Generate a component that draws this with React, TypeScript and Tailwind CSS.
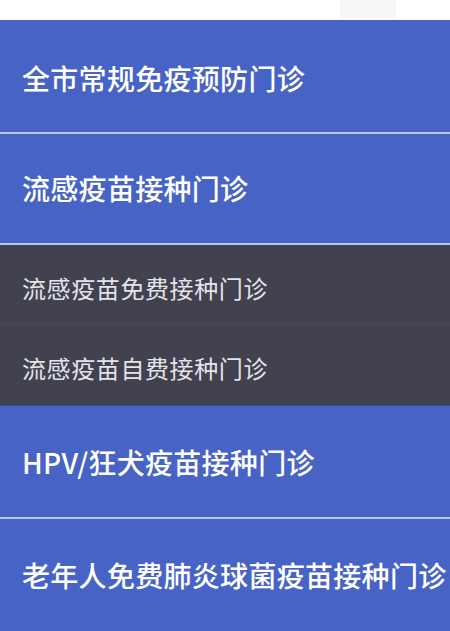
import React from "react";

const font = { fontFamily: '"Noto Sans CJK SC", "Noto Sans", sans-serif' };

function Main({ text, h }: { text: string; h: string }) {
  return (
    <div className={`flex items-center bg-[#4763c5] pl-[22px] ${h}`}>
      <span className="text-[28px] font-medium leading-none tracking-[0.3px] text-white whitespace-nowrap">{text}</span>
    </div>
  );
}

function Sub({ text, h }: { text: string; h: string }) {
  return (
    <div className={`flex items-center bg-[#42414f] pl-[22px] pt-[6px] ${h}`}>
      <span className="text-[24px] font-normal leading-none tracking-[0.6px] text-[#e4e4ea] whitespace-nowrap">{text}</span>
    </div>
  );
}

export default function App() {
  return (
    <div className="w-[450px] h-[631px] overflow-hidden flex flex-col bg-[#4763c5]" style={font}>
      <div className="h-[20px] bg-white flex">
        <div className="ml-[340px] w-[56px] h-[18px] bg-[#f6f7f8]" />
      </div>
      <Main text="全市常规免疫预防门诊" h="h-[112px] pt-[4px]" />
      <div className="h-[2px] bg-[#b9c4f2]" />
      <Main text="流感疫苗接种门诊" h="h-[110px]" />
      <div className="h-[2px] bg-[#b9c4f2]" />
      <Sub text="流感疫苗免费接种门诊" h="h-[79px]" />
      <div className="h-[1px] bg-[#4a4958]" />
      <Sub text="流感疫苗自费接种门诊" h="h-[80px]" />
      <div className="h-[1px] bg-[#3d4a8a]" />
      <Main text="HPV/狂犬疫苗接种门诊" h="h-[112px]" />
      <div className="h-[2px] bg-[#b9c4f2]" />
      <Main text="老年人免费肺炎球菌疫苗接种门诊" h="h-[112px]" />
    </div>
  );
}
